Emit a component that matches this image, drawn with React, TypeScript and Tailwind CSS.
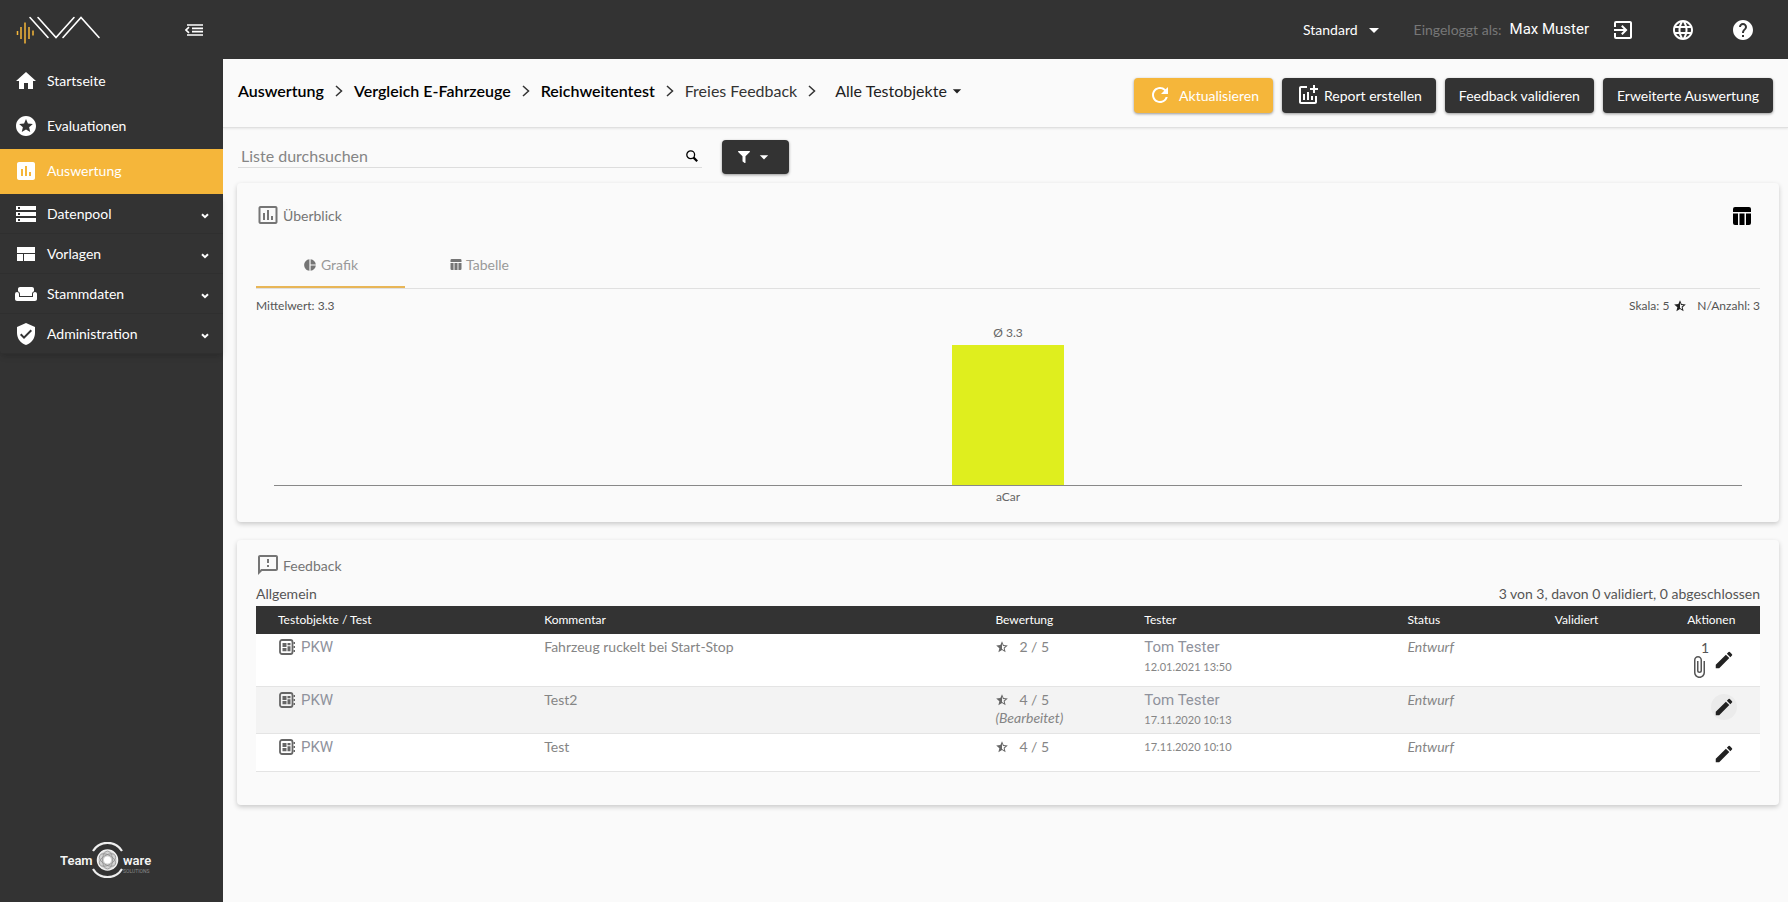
import React, { useState } from "react";
import {
  MdHome,
  MdStars,
  MdAssessment,
  MdStorage,
  MdWeekend,
  MdVerifiedUser,
  MdExitToApp,
  MdLanguage,
  MdHelp,
  MdRefresh,
  MdAddchart,
  MdPieChart,
  MdStarHalf,
  MdAttachFile,
  MdEdit,
  MdArrowDropDown,
  MdInsertChartOutlined,
  MdOutlineFeedback,
} from "react-icons/md";
import { FaFilter } from "react-icons/fa";
import clsx from "clsx";

type IconProps = { className?: string };

const ViewIcon = ({ className }: IconProps) => (
  <svg className={className} viewBox="0 0 24 24" fill="currentColor">
    <path d="M3 19h6v-7H3v7zm7 0h11v-7H10v7zM3 5v6h18V5H3z" />
  </svg>
);

const TableIcon = ({ className }: IconProps) => (
  <svg className={className} viewBox="0 0 18 18" fill="currentColor">
    <path d="M0 5V2a2 2 0 0 1 2-2h14a2 2 0 0 1 2 2v3zM0 6.500h5V18H2a2 2 0 0 1-2-2zM6.500 6.500h5V18h-5zM13 6.500h5V16a2 2 0 0 1-2 2h-3z" />
  </svg>
);

const BoardIcon = ({ className }: IconProps) => (
  <svg className={className} viewBox="0 0 18 18" fill="currentColor">
    <rect x="2" y="2" width="12.500" height="14" rx="2" fill="none" stroke="currentColor" strokeWidth="1.800" />
    <path d="M4.500 5h4v4h-4zM9.500 5h3v2.200h-3zM9.500 8.200h3v5h-3zM4.500 10h4v3.200h-4z" />
    <path d="M15.500 4h1.500v2h-1.500zM15.500 8h1.500v2h-1.500zM15.500 12h1.500v2h-1.500z" />
  </svg>
);

const CollapseIcon = ({ className }: IconProps) => (
  <svg className={className} viewBox="0 0 18 12" fill="none" stroke="currentColor" strokeWidth="1.700">
    <path d="M2 1h16M7 4.300h11M7 7.600h11M2 11h16" />
    <path d="M4 3.200 1 6l3 2.800" />
  </svg>
);

const ChevronDown = ({ className }: IconProps) => (
  <svg className={className} viewBox="0 0 8 6" fill="none" stroke="currentColor" strokeWidth="2">
    <path d="M1 1.200 4 4.200 7 1.200" />
  </svg>
);

const ChevronRight = () => (
  <svg className="h-3 w-2 shrink-0" viewBox="0 0 8 12" fill="none" stroke="#333" strokeWidth="1.500">
    <path d="m1 1 5.500 5L1 11" />
  </svg>
);

const SearchIcon = ({ className }: IconProps) => (
  <svg className={className} viewBox="0 0 12 12" fill="none" stroke="currentColor">
    <circle cx="4.700" cy="4.700" r="3.900" strokeWidth="1.300" />
    <path d="m7.600 7.600 3.600 3.600" strokeWidth="2.200" />
  </svg>
);

const Logo = () => (
  <svg className="h-7 w-[86px]" viewBox="0 0 86 28" fill="none">
    <g stroke="#f5b63a" strokeWidth="1.500">
      <path d="M1.500 15v4M5 11v12M9 6.500v21M13 11v12M17 14.500v5" />
    </g>
    <g stroke="#fff" strokeWidth="1.600" strokeLinecap="round">
      <path d="m14 1.500 18 20M22 1.500l18 20 18-20M47 21.500l18-20 18 20" />
    </g>
  </svg>
);

const TeamwareLogo = () => (
  <svg className="h-9 w-24" viewBox="0 0 96 36" fill="none">
    <g fill="#f4f4f4" fontFamily="'Liberation Sans Narrow', Roboto, sans-serif" fontWeight="600" fontSize="13">
      <text x="0" y="23">Team</text>
      <text x="63" y="23">ware</text>
    </g>
    <text x="63" y="31" fill="#8a8a8a" fontFamily="'Liberation Sans Narrow', Roboto, sans-serif" fontSize="5">
      SOLUTIONS
    </text>
    <g stroke="#eee" strokeWidth="2.200">
      <path d="M33 9a17 17 0 0 1 29 0M33 27a17 17 0 0 0 29 0" />
    </g>
    <circle cx="47.500" cy="18" r="10" fill="#d2d2d2" stroke="#f2f2f2" strokeWidth="1.500" />
    <g stroke="#8a8a8a" strokeWidth="0.700">
      <ellipse cx="47.500" cy="18" rx="9" ry="5" transform="rotate(30 47.500 18)" />
      <ellipse cx="47.500" cy="18" rx="9" ry="5" transform="rotate(90 47.500 18)" />
      <ellipse cx="47.500" cy="18" rx="9" ry="5" transform="rotate(150 47.500 18)" />
    </g>
    <circle cx="47.500" cy="18" r="3.500" fill="#fff" />
  </svg>
);

const mainLinks = [
  { label: "Startseite", icon: MdHome },
  { label: "Evaluationen", icon: MdStars },
  { label: "Auswertung", icon: MdAssessment, active: true },
];

const groups = [
  { label: "Datenpool", icon: MdStorage },
  { label: "Vorlagen", icon: ViewIcon },
  { label: "Stammdaten", icon: MdWeekend },
  { label: "Administration", icon: MdVerifiedUser },
];

const Sidebar = () => (
  <aside className="flex w-[223px] shrink-0 flex-col bg-[#333] text-white">
    <div className="flex h-[59px] items-center justify-between pl-4 pr-5">
      <Logo />
      <button aria-label="Menü einklappen">
        <CollapseIcon className="h-3 w-[18px]" />
      </button>
    </div>
    <nav>
      {mainLinks.map(({ label, icon: Icon, active }) => (
        <a
          key={label}
          href="#"
          className={clsx("flex h-[45px] items-center gap-[9px] pb-0.5 pl-3.5", active && "bg-[#f5b63a]")}
        >
          <Icon className="h-6 w-6" />
          <span>{label}</span>
        </a>
      ))}
      <div className="rounded-b shadow-md">
        {groups.map(({ label, icon: Icon }) => (
          <button
            key={label}
            className="flex h-10 w-full items-center gap-[9px] border-b border-[#2f2f2f] px-3.5"
          >
            <Icon className="h-6 w-6" />
            <span>{label}</span>
            <ChevronDown className="ml-auto mt-1 h-1.5 w-2" />
          </button>
        ))}
      </div>
    </nav>
    <div className="mt-auto flex justify-center pb-6 pr-2">
      <TeamwareLogo />
    </div>
  </aside>
);

const TopBar = () => (
  <header className="flex h-[59px] items-center justify-end bg-[#333] pr-[33px] text-white">
    <button className="flex items-center gap-1">
      Standard
      <MdArrowDropDown className="h-6 w-6" />
    </button>
    <span className="ml-7 text-[#777]">Eingeloggt als:</span>
    <span className="ml-2 font-[Roboto] text-[15px]">Max Muster</span>
    <div className="ml-[22px] flex items-center gap-9">
      <button aria-label="Abmelden">
        <MdExitToApp className="h-6 w-6" />
      </button>
      <button aria-label="Sprache">
        <MdLanguage className="h-6 w-6" />
      </button>
      <button aria-label="Hilfe">
        <MdHelp className="h-6 w-6" />
      </button>
    </div>
  </header>
);

const crumbs = ["Auswertung", "Vergleich E-Fahrzeuge", "Reichweitentest"];

const buttonClass =
  "flex h-[35px] items-center rounded-sm px-3.5 text-white shadow-[0_1px_3px_rgba(0,0,0,0.4)]";

const Toolbar = () => (
  <div className="flex h-[69px] items-center justify-between border-b border-[#e0e0e0] px-[15px] pt-1 shadow-[0_1px_2px_rgba(0,0,0,0.08)]">
    <nav className="flex items-center gap-[11px] pb-2 text-[16px]">
      {crumbs.map((crumb) => (
        <React.Fragment key={crumb}>
          <a href="#" className="font-semibold text-black">
            {crumb}
          </a>
          <ChevronRight />
        </React.Fragment>
      ))}
      <span className="text-[#333]">Freies Feedback</span>
      <ChevronRight />
      <button className="ml-2 flex items-center text-[#222]">
        Alle Testobjekte
        <MdArrowDropDown className="h-5 w-5" />
      </button>
    </nav>
    <div className="flex items-center gap-[9px]">
      <button className={clsx(buttonClass, "gap-[7px] bg-[#f5b63a]")}>
        <MdRefresh className="h-6 w-6" />
        Aktualisieren
      </button>
      <button className={clsx(buttonClass, "gap-1 bg-[#333]")}>
        <MdAddchart className="h-6 w-6" />
        Report erstellen
      </button>
      <button className={clsx(buttonClass, "bg-[#333]")}>Feedback validieren</button>
      <button className={clsx(buttonClass, "bg-[#333]")}>Erweiterte Auswertung</button>
    </div>
  </div>
);

const SearchRow = () => {
  const [query, setQuery] = useState("");

  return (
    <div className="flex items-center px-px pt-3">
      <label className="flex h-[22px] w-[464px] items-center border-b border-[#ddd] pb-0.5 pr-1">
        <input
          type="text"
          aria-label="Liste durchsuchen"
          placeholder="Liste durchsuchen"
          value={query}
          onChange={(e) => setQuery(e.target.value)}
          className="w-full bg-transparent pl-[3px] text-[16px] leading-5 outline-none placeholder:text-[#858585]"
        />
        <SearchIcon className="h-3 w-3 shrink-0 text-black" />
      </label>
      <button
        aria-label="Filter"
        className="ml-5 flex h-[34px] w-[67px] items-center justify-center gap-1 rounded-sm bg-[#333] text-white shadow-[0_1px_3px_rgba(0,0,0,0.4)]"
      >
        <FaFilter className="h-3 w-3" />
        <MdArrowDropDown className="h-5 w-5" />
      </button>
    </div>
  );
};

const cardClass =
  "rounded bg-[#fafafa] px-[19px] shadow-[0_2px_5px_rgba(0,0,0,0.2)]";

const Overview = () => (
  <section className={clsx(cardClass, "mt-[9px] pb-4 pt-5")}>
    <div className="flex h-6 items-center justify-between pr-[9px]">
      <h2 className="flex items-center gap-[3px] text-[#757575]">
        <MdInsertChartOutlined className="h-6 w-6" />
        Überblick
      </h2>
      <button aria-label="Tabellenansicht" className="pt-0.5 text-black">
        <TableIcon className="h-[18px] w-[18px]" />
      </button>
    </div>
    <div className="mt-4 flex border-b border-[#e0e0e0] text-[#999]">
      <button className="flex h-[45px] w-[149px] items-center justify-center gap-1 border-b-2 border-[#e8b657]">
        <MdPieChart className="h-3.5 w-3.5 text-[#757575]" />
        Grafik
      </button>
      <button className="flex h-[45px] w-[149px] items-center justify-center gap-1 border-b-2 border-transparent">
        <TableIcon className="h-[11px] w-3 text-[#757575]" />
        Tabelle
      </button>
    </div>
    <div className="mt-[7px] flex h-5 items-center text-[12px] text-[#555]">
      <span>Mittelwert: 3.3</span>
      <span className="ml-auto">Skala: 5</span>
      <MdStarHalf className="ml-1 mr-2.5 h-3.5 w-3.5 text-[#222]" />
      <span>N/Anzahl: 3</span>
    </div>
    <div className="mx-[18px] mt-[9px] text-center text-[12px] leading-4 text-[#666]">
      <div>Ø 3.3</div>
      <div className="mt-1 border-b border-[#888]">
        <div className="mx-auto h-[140px] w-[112px] bg-[#dfee1e]" />
      </div>
      <div className="mt-[3px] pb-px">aCar</div>
    </div>
  </section>
);

const rows = [
  {
    comment: "Fahrzeug ruckelt bei Start-Stop",
    rating: 2,
    tester: "Tom Tester",
    date: "12.01.2021 13:50",
    attachments: 1,
    height: "h-[52px]",
  },
  {
    comment: "Test2",
    rating: 4,
    edited: true,
    tester: "Tom Tester",
    date: "17.11.2020 10:13",
    hovered: true,
    height: "h-[47px]",
  },
  {
    comment: "Test",
    rating: 4,
    date: "17.11.2020 10:10",
    height: "h-[38px]",
  },
];

const columns = [
  { label: "Testobjekte / Test", width: "w-[17.7%]" },
  { label: "Kommentar", width: "w-[30%]" },
  { label: "Bewertung", width: "w-[9.9%]" },
  { label: "Tester", width: "w-[17.5%]" },
  { label: "Status", width: "w-[9.8%]" },
  { label: "Validiert", width: "w-[8.8%]" },
  { label: "Aktionen", width: "w-[6.3%]" },
];

const Feedback = () => (
  <section className={clsx(cardClass, "mt-[18px] pb-[33px] pt-[11px]")}>
    <h2 className="flex h-7 items-center gap-[3px] text-[#757575]">
      <MdOutlineFeedback className="h-6 w-6" />
      Feedback
    </h2>
    <div className="mt-1 flex h-[23px] items-center justify-between pb-0.5 text-[#555]">
      <span>Allgemein</span>
      <span>3 von 3, davon 0 validiert, 0 abgeschlossen</span>
    </div>
    <table className="w-full table-fixed text-left text-[#858585]">
      <thead className="bg-[#333] text-[12px] text-white">
        <tr className="h-7">
          {columns.map(({ label, width }) => (
            <th key={label} className={clsx("pl-[22px] font-normal", width)}>
              {label}
            </th>
          ))}
        </tr>
      </thead>
      <tbody>
        {rows.map((row) => (
          <tr
            key={row.comment}
            className={clsx(
              "border-b border-[#e4e4e4] align-top",
              row.height,
              row.hovered ? "bg-[#f3f3f3]" : "bg-white"
            )}
          >
            <td className="pl-[22px] pt-1">
              <span className="flex items-center gap-[5px] font-[Roboto] text-[15px] leading-[18px] text-[#8f929c]">
                <BoardIcon className="h-[18px] w-[18px] text-[#666]" />
                PKW
              </span>
            </td>
            <td className="pl-[22px] pt-1 leading-[18px]">{row.comment}</td>
            <td className="pl-[22px] pt-1 leading-[18px]">
              <span className="flex items-center gap-2.5">
                <MdStarHalf className="h-3.5 w-3.5 text-[#666]" />
                {row.rating} / 5
              </span>
              {row.edited && <em>(Bearbeitet)</em>}
            </td>
            <td className="pl-[22px] pt-1 leading-[18px]">
              {row.tester && (
                <div className="pb-0.5 font-[Roboto] text-[15px] text-[#8f929c]">{row.tester}</div>
              )}
              <div className="text-[11px]">{row.date}</div>
            </td>
            <td className="pl-[22px] pt-1 italic leading-[18px]">Entwurf</td>
            <td />
            <td className="pr-[23px] pt-[7px]">
              <div className="flex items-center justify-end text-[#222]">
                {row.attachments && (
                  <button aria-label="Anhänge" className="flex flex-col items-end text-[#555]">
                    <span className="pr-0.5 leading-[14px]">{row.attachments}</span>
                    <MdAttachFile className="h-6 w-6" />
                  </button>
                )}
                <button
                  aria-label="Bearbeiten"
                  className={clsx("rounded-full p-0.5", row.hovered && "bg-[#ebebeb]")}
                >
                  <MdEdit className="h-[22px] w-[22px]" />
                </button>
              </div>
            </td>
          </tr>
        ))}
      </tbody>
    </table>
  </section>
);

export default function App() {
  return (
    <div className="flex min-h-screen bg-[#fafafa] font-[Lato,sans-serif] text-[14px]">
      <Sidebar />
      <div className="flex min-w-0 flex-1 flex-col">
        <TopBar />
        <Toolbar />
        <main className="pb-4 pl-3.5 pr-[9px]">
          <SearchRow />
          <Overview />
          <Feedback />
        </main>
      </div>
    </div>
  );
}
